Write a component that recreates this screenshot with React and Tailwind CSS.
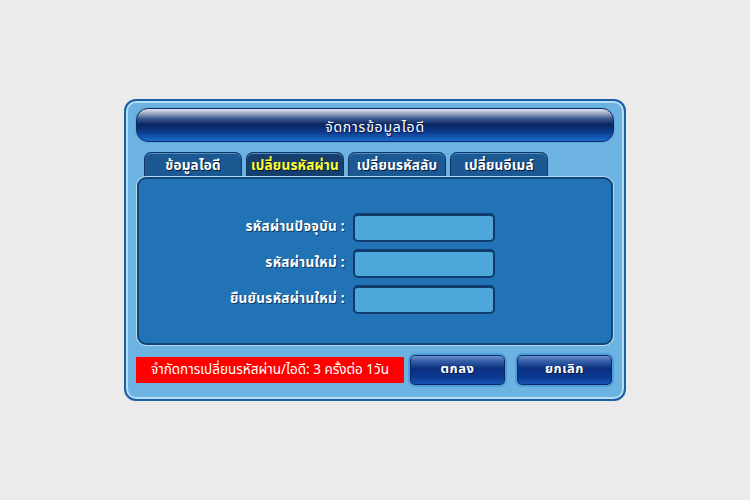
import React, { useState } from 'react';

const TABS = ['ข้อมูลไอดี', 'เปลี่ยนรหัสผ่าน', 'เปลี่ยนรหัสลับ', 'เปลี่ยนอีเมล์'];

const FIELDS = ['รหัสผ่านปัจจุบัน :', 'รหัสผ่านใหม่ :', 'ยืนยันรหัสผ่านใหม่ :'];

const FONT = { fontFamily: 'Tahoma, "Noto Sans Thai", "Noto Sans", "DejaVu Sans", sans-serif' };

function GlossButton({ children }) {
  return (
    <button className="h-[34px] w-[99px] rounded-[7px] border-2 border-[#4c9fdc] bg-[linear-gradient(to_bottom,#7c9dd2_0%,#3a64ad_18%,#0b2f80_45%,#0b3a92_75%,#1a58b8_100%)] text-[13px] font-bold tracking-[0.5px] text-white [text-shadow:1px_1px_0_#061a44] shadow-[inset_0_0_0_1px_#0a2a66]">
      {children}
    </button>
  );
}

export default function App() {
  const [active, setActive] = useState(1);

  return (
    <div className="flex h-[500px] w-full items-center justify-center bg-[#ebebeb]" style={FONT}>
      <div className="flex h-[302px] w-[502px] flex-col rounded-[12px] border-2 border-[#1d5fa6] bg-[#6db3e1] p-[2px] shadow-[inset_0_0_0_2px_#b4def6]">
        {/* title bar */}
        <div className="mx-[8px] mt-[5px] flex h-[34px] items-center justify-center rounded-[12px] border border-[#0a2c66] bg-[linear-gradient(to_bottom,#e2e5ee_0%,#a5b0c8_12%,#3d5a8f_30%,#0a2663_48%,#0c3a8c_72%,#1c6cd0_100%)] shadow-[0_0_0_1px_#5fa8e0]">
          <span className="pt-[4px] text-[14px] tracking-[0.8px] text-white [text-shadow:1px_1px_0_#051c4c]">จัดการข้อมูลไอดี</span>
        </div>

        {/* tabs */}
        <div className="mt-[10px] flex gap-[4px] pl-[16px]">
          {TABS.map((t, i) => (
            <button
              key={t}
              onClick={() => setActive(i)}
              className={
                'h-[25px] w-[98px] rounded-t-[7px] border border-b-0 border-[#0e3766] pt-[2px] text-[13.5px] font-bold tracking-[0.2px] [text-shadow:1px_1px_0_#061a3c] shadow-[inset_0_1px_0_#4f8fc8] ' +
                (i === active ? 'bg-[#163f6e] text-[#ffff30]' : 'bg-[#1c5892] text-white')
              }
            >
              {t}
            </button>
          ))}
        </div>

        {/* content panel */}
        <div className="mx-[9px] flex h-[168px] flex-col justify-center gap-[7px] rounded-[9px] border-2 border-[#124676] bg-[#2273b5] pt-[4px] shadow-[0_0_0_1px_#b2dcf4]">
          {FIELDS.map((f) => (
            <div key={f} className="flex items-center">
              <span className="w-[214px] pr-[8px] text-right text-[13.5px] font-bold tracking-[0.3px] text-white [text-shadow:1px_1px_0_#0d3b66]">{f}</span>
              <div className="h-[29px] w-[142px] rounded-[5px] border-2 border-t-[3px] border-[#0f3c6c] bg-[#4da7da]" />
            </div>
          ))}
        </div>

        {/* footer */}
        <div className="mt-[8px] flex items-center pl-[8px]">
          <div className="flex h-[26px] w-[268px] items-center justify-center bg-[#ff0000] text-[13.5px] text-white">
            จำกัดการเปลี่ยนรหัสผ่าน/ไอดี: 3 ครั้งต่อ 1วัน
          </div>
          <div className="ml-[4px] flex gap-[8px]">
            <GlossButton>ตกลง</GlossButton>
            <GlossButton>ยกเลิก</GlossButton>
          </div>
        </div>
      </div>
    </div>
  );
}
